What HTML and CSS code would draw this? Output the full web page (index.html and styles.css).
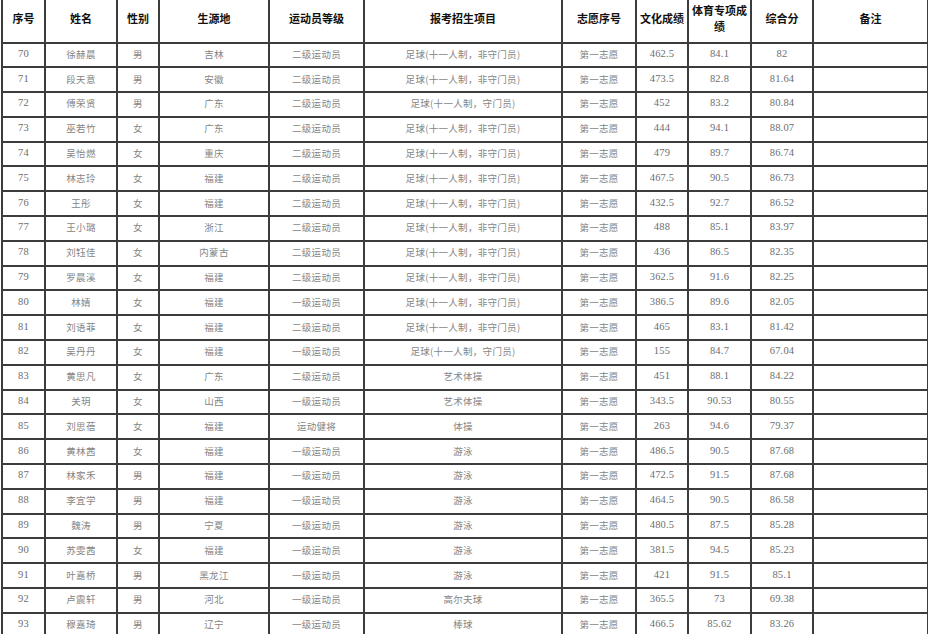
FILE: index.html
```html
<!DOCTYPE html>
<html lang="zh-CN">
<head>
<meta charset="utf-8">
<title>招生名单</title>
<link rel="stylesheet" href="styles.css">
</head>
<body>
<div class="sheet">
<table class="roster">
<colgroup>
<col class="c1"><col class="c2"><col class="c3"><col class="c4"><col class="c5"><col class="c6"><col class="c7"><col class="c8"><col class="c9"><col class="c10"><col class="c11">
</colgroup>
<thead>
<tr><th>序号</th><th>姓名</th><th>性别</th><th>生源地</th><th>运动员等级</th><th>报考招生项目</th><th>志愿序号</th><th>文化成绩</th><th class="wrap">体育专项成绩</th><th>综合分</th><th>备注</th></tr>
</thead>
<tbody>
<tr><td class="n">70</td><td>徐赫晨</td><td>男</td><td>吉林</td><td>二级运动员</td><td>足球(十一人制，非守门员)</td><td>第一志愿</td><td class="n">462.5</td><td class="n">84.1</td><td class="n">82</td><td></td></tr>
<tr><td class="n">71</td><td>段天意</td><td>男</td><td>安徽</td><td>二级运动员</td><td>足球(十一人制，非守门员)</td><td>第一志愿</td><td class="n">473.5</td><td class="n">82.8</td><td class="n">81.64</td><td></td></tr>
<tr><td class="n">72</td><td>傅荣贤</td><td>男</td><td>广东</td><td>二级运动员</td><td>足球(十一人制，守门员)</td><td>第一志愿</td><td class="n">452</td><td class="n">83.2</td><td class="n">80.84</td><td></td></tr>
<tr><td class="n">73</td><td>巫若竹</td><td>女</td><td>广东</td><td>二级运动员</td><td>足球(十一人制，非守门员)</td><td>第一志愿</td><td class="n">444</td><td class="n">94.1</td><td class="n">88.07</td><td></td></tr>
<tr><td class="n">74</td><td>吴怡燃</td><td>女</td><td>重庆</td><td>二级运动员</td><td>足球(十一人制，非守门员)</td><td>第一志愿</td><td class="n">479</td><td class="n">89.7</td><td class="n">86.74</td><td></td></tr>
<tr><td class="n">75</td><td>林志玲</td><td>女</td><td>福建</td><td>二级运动员</td><td>足球(十一人制，非守门员)</td><td>第一志愿</td><td class="n">467.5</td><td class="n">90.5</td><td class="n">86.73</td><td></td></tr>
<tr><td class="n">76</td><td>王彤</td><td>女</td><td>福建</td><td>二级运动员</td><td>足球(十一人制，非守门员)</td><td>第一志愿</td><td class="n">432.5</td><td class="n">92.7</td><td class="n">86.52</td><td></td></tr>
<tr><td class="n">77</td><td>王小璐</td><td>女</td><td>浙江</td><td>二级运动员</td><td>足球(十一人制，非守门员)</td><td>第一志愿</td><td class="n">488</td><td class="n">85.1</td><td class="n">83.97</td><td></td></tr>
<tr><td class="n">78</td><td>刘钰佳</td><td>女</td><td>内蒙古</td><td>二级运动员</td><td>足球(十一人制，非守门员)</td><td>第一志愿</td><td class="n">436</td><td class="n">86.5</td><td class="n">82.35</td><td></td></tr>
<tr><td class="n">79</td><td>罗晨溪</td><td>女</td><td>福建</td><td>二级运动员</td><td>足球(十一人制，非守门员)</td><td>第一志愿</td><td class="n">362.5</td><td class="n">91.6</td><td class="n">82.25</td><td></td></tr>
<tr><td class="n">80</td><td>林婧</td><td>女</td><td>福建</td><td>一级运动员</td><td>足球(十一人制，非守门员)</td><td>第一志愿</td><td class="n">386.5</td><td class="n">89.6</td><td class="n">82.05</td><td></td></tr>
<tr><td class="n">81</td><td>刘语菲</td><td>女</td><td>福建</td><td>二级运动员</td><td>足球(十一人制，非守门员)</td><td>第一志愿</td><td class="n">465</td><td class="n">83.1</td><td class="n">81.42</td><td></td></tr>
<tr><td class="n">82</td><td>吴丹丹</td><td>女</td><td>福建</td><td>一级运动员</td><td>足球(十一人制，守门员)</td><td>第一志愿</td><td class="n">155</td><td class="n">84.7</td><td class="n">67.04</td><td></td></tr>
<tr><td class="n">83</td><td>黄思凡</td><td>女</td><td>广东</td><td>二级运动员</td><td>艺术体操</td><td>第一志愿</td><td class="n">451</td><td class="n">88.1</td><td class="n">84.22</td><td></td></tr>
<tr><td class="n">84</td><td>关玥</td><td>女</td><td>山西</td><td>一级运动员</td><td>艺术体操</td><td>第一志愿</td><td class="n">343.5</td><td class="n">90.53</td><td class="n">80.55</td><td></td></tr>
<tr><td class="n">85</td><td>刘思蓓</td><td>女</td><td>福建</td><td>运动健将</td><td>体操</td><td>第一志愿</td><td class="n">263</td><td class="n">94.6</td><td class="n">79.37</td><td></td></tr>
<tr><td class="n">86</td><td>黄林茜</td><td>女</td><td>福建</td><td>一级运动员</td><td>游泳</td><td>第一志愿</td><td class="n">486.5</td><td class="n">90.5</td><td class="n">87.68</td><td></td></tr>
<tr><td class="n">87</td><td>林家禾</td><td>男</td><td>福建</td><td>一级运动员</td><td>游泳</td><td>第一志愿</td><td class="n">472.5</td><td class="n">91.5</td><td class="n">87.68</td><td></td></tr>
<tr><td class="n">88</td><td>李宜学</td><td>男</td><td>福建</td><td>一级运动员</td><td>游泳</td><td>第一志愿</td><td class="n">464.5</td><td class="n">90.5</td><td class="n">86.58</td><td></td></tr>
<tr><td class="n">89</td><td>魏涛</td><td>男</td><td>宁夏</td><td>一级运动员</td><td>游泳</td><td>第一志愿</td><td class="n">480.5</td><td class="n">87.5</td><td class="n">85.28</td><td></td></tr>
<tr><td class="n">90</td><td>苏雯茜</td><td>女</td><td>福建</td><td>一级运动员</td><td>游泳</td><td>第一志愿</td><td class="n">381.5</td><td class="n">94.5</td><td class="n">85.23</td><td></td></tr>
<tr><td class="n">91</td><td>叶嘉桥</td><td>男</td><td>黑龙江</td><td>一级运动员</td><td>游泳</td><td>第一志愿</td><td class="n">421</td><td class="n">91.5</td><td class="n">85.1</td><td></td></tr>
<tr><td class="n">92</td><td>卢震轩</td><td>男</td><td>河北</td><td>一级运动员</td><td>高尔夫球</td><td>第一志愿</td><td class="n">365.5</td><td class="n">73</td><td class="n">69.38</td><td></td></tr>
<tr><td class="n">93</td><td>穆嘉琦</td><td>男</td><td>辽宁</td><td>一级运动员</td><td>棒球</td><td>第一志愿</td><td class="n">466.5</td><td class="n">85.62</td><td class="n">83.26</td><td></td></tr>
</tbody>
</table>
</div>
</body>
</html>
```
FILE: styles.css
```css
html, body {
  margin: 0;
  padding: 0;
  background: #ffffff;
}

.sheet {
  padding-left: 1px;
  overflow: hidden;
  height: 634px;
}

.roster {
  border-collapse: collapse;
  table-layout: fixed;
  width: 926px;
}

.c1 { width: 43px; }
.c2 { width: 72px; }
.c3 { width: 42px; }
.c4 { width: 110px; }
.c5 { width: 95px; }
.c6 { width: 198px; }
.c7 { width: 74px; }
.c8 { width: 52px; }
.c9 { width: 63px; }
.c10 { width: 62px; }
.c11 { width: 115px; }

.roster th,
.roster td {
  border: 2px solid #3c3c3c;
  padding: 0 0 2px 0;
  text-align: center;
  vertical-align: middle;
  overflow: hidden;
  white-space: nowrap;
}

.roster th {
  border-top: none;
  height: 36.5px;
  padding: 0 1px 5px 1px;
  font-family: "Noto Sans CJK SC", sans-serif;
  font-weight: 700;
  font-size: 11px;
  color: #111111;
  line-height: 16px;
}

.roster th.wrap {
  white-space: normal;
  word-break: break-all;
  padding: 0 0 5px 0;
}

.roster td {
  height: 20.8px;
  font-family: "Noto Sans CJK SC", sans-serif;
  font-weight: 400;
  font-size: 9.5px;
  letter-spacing: 0.3px;
  color: #858585;
  line-height: 12px;
}

.roster td.n {
  font-family: "Liberation Serif", "Noto Sans CJK SC", serif;
  font-size: 10.5px;
  letter-spacing: 0.2px;
  color: #6e6e6e;
}
```
